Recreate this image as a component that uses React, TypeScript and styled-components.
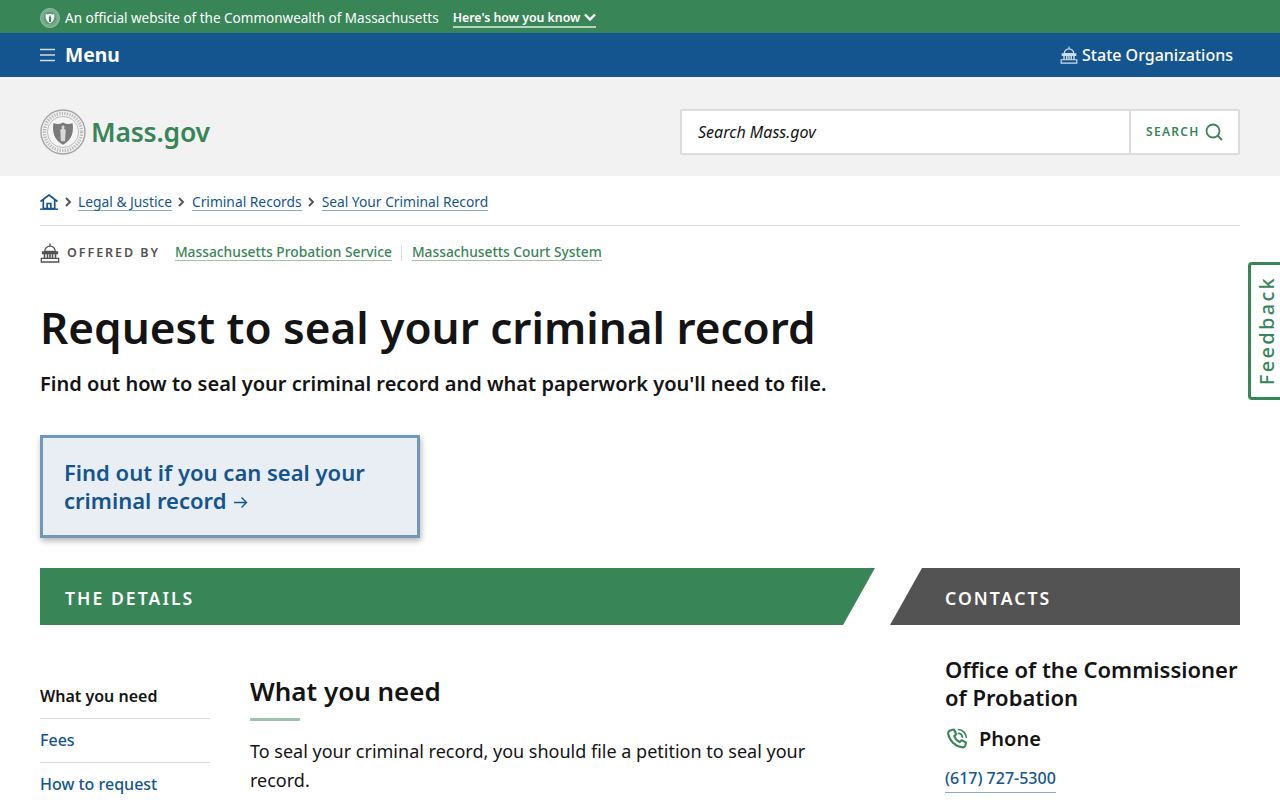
import React from "react";
import styled, { createGlobalStyle } from "styled-components";

const Global = createGlobalStyle`
  html, body { margin: 0; padding: 0; height: 800px; overflow: hidden; background: #fff; }
  body { font-family: "Noto Sans", sans-serif; color: #141414; }
  * { box-sizing: border-box; }
  a { text-decoration: none; }
  h1, h2, h3, p, ul { margin: 0; padding: 0; }
`;

const Page = styled.div`
  position: relative;
  width: 1280px;
  height: 800px;
  overflow: hidden;
`;

const SealBar = styled.div`
  height: 33px;
  background: #388557;
  color: #fff;
  display: flex;
  align-items: center;
  padding: 2px 40px 0;
  font-size: 13.5px;
`;
const SealText = styled.span`
  margin-left: 5px;
`;
const KnowLink = styled.a`
  margin-left: 14px;
  display: flex;
  align-items: center;
  gap: 4px;
  font-size: 12.35px;
  font-weight: 600;
  color: #fff;
  border-bottom: 2px solid #b5d3c1;
  line-height: 17px;
  margin-top: 1px;
`;

const NavBar = styled.nav`
  height: 44px;
  background: #14558f;
  color: #fff;
  display: flex;
  align-items: center;
  justify-content: space-between;
  padding: 0 47px 0 40px;
`;
const MenuButton = styled.div`
  display: flex;
  align-items: center;
  gap: 10px;
  font-size: 19.3px;
  font-weight: 700;
  line-height: 44px;
`;
const OrgLink = styled.a`
  display: flex;
  align-items: center;
  gap: 4px;
  color: #fff;
  font-size: 16px;
  font-weight: 500;
`;

const Header = styled.header`
  height: 99px;
  background: #f2f2f2;
  display: flex;
  align-items: center;
  justify-content: space-between;
  padding: 10px 40px 0;
`;
const Logo = styled.a`
  display: flex;
  align-items: center;
  gap: 5px;
  color: #388557;
  font-size: 26.5px;
  font-weight: 600;
  letter-spacing: -0.2px;
  margin-top: 1px;
`;
const SearchBox = styled.form`
  width: 560px;
  height: 46px;
  margin-top: 1px;
  display: flex;
  background: #fff;
  border: 2px solid #dcdcdc;
`;
const SearchInput = styled.div`
  flex: 1;
  padding-left: 16px;
  font-size: 16px;
  font-style: italic;
  line-height: 42px;
  color: #141414;
`;
const SearchButton = styled.div`
  width: 109px;
  border-left: 2px solid #dcdcdc;
  display: flex;
  align-items: center;
  gap: 5px;
  padding-left: 15px;
  padding-bottom: 1px;
  color: #388557;
  font-size: 12px;
  font-weight: 600;
  letter-spacing: 1.3px;
`;

const Container = styled.div`
  padding: 0 40px;
`;
const Breadcrumbs = styled.div`
  height: 50px;
  display: flex;
  align-items: center;
  border-bottom: 1px solid #dcdcdc;
  padding-top: 3px;
  font-size: 13.8px;
`;
const Crumb = styled.a`
  color: #14558f;
  border-bottom: 1px solid #8aaac7;
  line-height: 17px;
`;
const Sep = styled.span`
  display: inline-flex;
  margin: 0 6.5px;
`;
const HomeIcon = styled.span`
  display: inline-flex;
`;

const OfferedRow = styled.div`
  height: 53px;
  display: flex;
  align-items: center;
`;
const OfferedLabel = styled.span`
  margin: 0 15px 0 7px;
  font-size: 12.5px;
  font-weight: 600;
  letter-spacing: 1.95px;
  color: #535353;
`;
const OrgRef = styled.a`
  color: #388557;
  font-size: 13.8px;
  font-weight: 500;
  line-height: 17px;
  border-bottom: 1px solid #9cc2ab;
  margin-bottom: 2px;
`;
const OrgDivider = styled.span`
  width: 1px;
  height: 16px;
  background: #dcdcdc;
  margin: 0 10px 0 9px;
`;

const Title = styled.h1`
  margin-top: 20px;
  font-size: 44.06px;
  line-height: 56px;
  font-weight: 600;
  color: #141414;
`;
const Lede = styled.p`
  margin-top: 16px;
  font-size: 20.03px;
  line-height: 26px;
  font-weight: 600;
  color: #141414;
`;
const CallOut = styled.a`
  display: block;
  margin-top: 38px;
  width: 380px;
  height: 103px;
  padding: 20px 21px;
  background: #e8eef4;
  border: 3px solid #7397b9;
  box-shadow: 1px 3px 6px rgba(0, 0, 0, 0.3);
  color: #14558f;
  font-size: 22px;
  line-height: 28px;
  font-weight: 600;
`;
const ArrowGlyph = styled.span`
  display: inline-flex;
  margin-left: 6px;
`;

const Bands = styled.div`
  margin-top: 30px;
  display: flex;
  gap: 15px;
`;
const BandTitle = styled.div<{ $tone: string; $clip: string; $pad: number; $width: number }>`
  width: ${(p) => p.$width}px;
  height: 57px;
  padding-left: ${(p) => p.$pad}px;
  background: ${(p) => p.$tone};
  clip-path: ${(p) => p.$clip};
  color: #fff;
  font-size: 17.6px;
  font-weight: 600;
  letter-spacing: 2.05px;
  line-height: 61px;
`;

const Columns = styled.div`
  display: flex;
  align-items: flex-start;
`;
const SideNav = styled.ul`
  width: 170px;
  margin-top: 50px;
  list-style: none;
`;
const SideItem = styled.li<{ $active?: boolean }>`
  height: 44px;
  line-height: 42px;
  font-size: 16px;
  font-weight: ${(p) => (p.$active ? 600 : 500)};
  color: ${(p) => (p.$active ? "#141414" : "#14558f")};
  border-bottom: 1px solid #dcdcdc;
  &:last-child { border-bottom: 0; }
`;
const MainCol = styled.div`
  width: 575px;
  margin: 47px 0 0 40px;
`;
const SectionTitle = styled.h2`
  font-size: 26px;
  line-height: 38px;
  font-weight: 600;
`;
const Rule = styled.div`
  width: 50px;
  height: 3px;
  margin-top: 8px;
  background: #9cc2ab;
  border-radius: 1px;
`;
const Body = styled.p`
  margin-top: 16px;
  font-size: 18px;
  line-height: 29px;
`;
const ContactCol = styled.div`
  margin: 30px 0 0 120px;
  width: 295px;
`;
const ContactName = styled.h3`
  font-size: 22px;
  line-height: 28px;
  font-weight: 600;
  white-space: nowrap;
`;
const ContactHead = styled.div`
  margin-top: 14px;
  display: flex;
  align-items: center;
  gap: 10px;
  font-size: 20px;
  line-height: 28px;
  font-weight: 600;
`;
const PhoneLink = styled.a`
  display: inline-block;
  margin-top: 11px;
  color: #14558f;
  font-size: 16px;
  font-weight: 500;
  line-height: 28px;
  border-bottom: 1px solid #8aaac7;
`;

const Feedback = styled.a`
  position: absolute;
  right: 0;
  top: 262px;
  width: 32px;
  height: 138px;
  padding-left: 3px;
  background: #fff;
  border: 3px solid #388557;
  border-right: 0;
  border-radius: 4px 0 0 4px;
  display: flex;
  align-items: center;
  justify-content: center;
  color: #388557;
  font-size: 20px;
  font-weight: 500;
  letter-spacing: 2.3px;
`;
const FeedbackText = styled.span`
  writing-mode: vertical-rl;
  transform: rotate(180deg);
  line-height: 26px;
`;

const Seal = ({ size, ring, fill, bg, inner }: { size: number; ring: string; fill: string; bg: string; inner: string }) => (
  <svg width={size} height={size} viewBox="0 0 46 46" aria-hidden="true">
    <circle cx="23" cy="23" r="22" fill={bg} stroke={ring} strokeWidth="1.4" />
    <circle cx="23" cy="23" r="18.6" fill="none" stroke={ring} strokeWidth="3.4" strokeDasharray="1.3 1.3" opacity="0.75" />
    <circle cx="23" cy="23" r="15.6" fill="none" stroke={ring} strokeWidth="0.7" />
    <path d="M13.500 14c3 1.400 6.300 1.200 9.500-.6 3.200 1.800 6.500 2 9.500.6 1.500 8.500-.3 16.700-9.500 21.800C13.800 30.700 12 22.500 13.500 14z" fill={fill} />
    <path d="M23 16.500c1 0 1.500.8 1.500 1.700 0 .6-.3 1-.6 1.300l1.800 1.300-.6 11.500h-4.200l-.6-11.500 1.800-1.300c-.3-.3-.6-.7-.6-1.300 0-.9.500-1.700 1.500-1.700z" fill={inner} />
  </svg>
);

const Capitol = ({ size, color }: { size: number; color: string }) => (
  <svg width={size} height={size} viewBox="0 0 20 20" fill="none" stroke={color} strokeWidth="1.300" aria-hidden="true">
    <path d="M10 .5v2.500" />
    <path d="M4.700 8.500c0-3 2.300-5.300 5.300-5.300s5.300 2.300 5.300 5.300z" />
    <path d="M2.500 8.800h15v1.700h-15z" fill={color} />
    <path d="M4.500 10.500v4.700M7.500 10.500v4.700M10 10.500v4.700M12.500 10.500v4.700M15.500 10.500v4.700" strokeWidth="1.600" />
    <path d="M1.300 15.300h17.400v3.700H1.300z" />
  </svg>
);

const Chevron = () => (
  <svg width="7" height="10" viewBox="0 0 7 10" fill="none" stroke="#535353" strokeWidth="1.900" aria-hidden="true">
    <path d="M1 1l4 4-4 4" />
  </svg>
);

export default function App() {
  return (
    <Page>
      <Global />
      <SealBar>
        <Seal size={20} ring="#bcd8c7" fill="#ffffff" bg="#5c9c76" inner="#388557" />
        <SealText>An official website of the Commonwealth of Massachusetts</SealText>
        <KnowLink>
          Here's how you know
          <svg width="12" height="9" viewBox="0 0 12 9" fill="none" stroke="#fff" strokeWidth="2.400" aria-hidden="true">
            <path d="M1 1.500l5 5 5-5" />
          </svg>
        </KnowLink>
      </SealBar>
      <NavBar>
        <MenuButton>
          <svg width="15" height="14" viewBox="0 0 15 14" fill="none" stroke="#cfddea" strokeWidth="1.500" aria-hidden="true">
            <path d="M0 1.500h15M0 7h15M0 12.500h15" />
          </svg>
          Menu
        </MenuButton>
        <OrgLink>
          <Capitol size={18} color="#cfddea" />
          State Organizations
        </OrgLink>
      </NavBar>
      <Header>
        <Logo>
          <Seal size={46} ring="#a5a5a5" fill="#7a7a7a" bg="#f4f4f4" inner="#d9d9d9" />
          Mass.gov
        </Logo>
        <SearchBox>
          <SearchInput>Search Mass.gov</SearchInput>
          <SearchButton>
            SEARCH
            <svg width="18" height="18" viewBox="0 0 18 18" fill="none" stroke="#388557" strokeWidth="1.800" aria-hidden="true">
              <circle cx="8" cy="8" r="6.500" />
              <path d="M12.500 12.500l4.500 4.500" />
            </svg>
          </SearchButton>
        </SearchBox>
      </Header>
      <Container>
        <Breadcrumbs>
          <HomeIcon>
            <svg width="18" height="16" viewBox="0 0 18 16" fill="none" stroke="#14558f" strokeWidth="1.700" aria-hidden="true">
              <path d="M.5 7.500L9 1l8.500 6.500" />
              <path d="M3.300 6v8.500h11.400V6" />
              <path d="M7.200 14.500V9.500h3.600v5" />
              <path d="M0 15.200h18" strokeWidth="1.400" />
            </svg>
          </HomeIcon>
          <Sep><Chevron /></Sep>
          <Crumb>Legal &amp; Justice</Crumb>
          <Sep><Chevron /></Sep>
          <Crumb>Criminal Records</Crumb>
          <Sep><Chevron /></Sep>
          <Crumb>Seal Your Criminal Record</Crumb>
        </Breadcrumbs>
        <OfferedRow>
          <Capitol size={20} color="#535353" />
          <OfferedLabel>OFFERED BY</OfferedLabel>
          <OrgRef>Massachusetts Probation Service</OrgRef>
          <OrgDivider />
          <OrgRef>Massachusetts Court System</OrgRef>
        </OfferedRow>
        <Title>Request to seal your criminal record</Title>
        <Lede>Find out how to seal your criminal record and what paperwork you'll need to file.</Lede>
        <CallOut>
          Find out if you can seal your
          <br />
          criminal record
          <ArrowGlyph>
            <svg width="15" height="13" viewBox="0 0 15 13" fill="none" stroke="#14558f" strokeWidth="1.400" aria-hidden="true">
              <path d="M1 6.500h12.500M8.500 1.500l5 5-5 5" />
            </svg>
          </ArrowGlyph>
        </CallOut>
        <Bands>
          <BandTitle $tone="#388557" $width={835} $pad={25} $clip="polygon(0 0, 100% 0, 803px 100%, 0 100%)">
            THE DETAILS
          </BandTitle>
          <BandTitle $tone="#535353" $width={350} $pad={55} $clip="polygon(32px 0, 100% 0, 100% 100%, 0 100%)">
            CONTACTS
          </BandTitle>
        </Bands>
        <Columns>
          <SideNav>
            <SideItem $active>What you need</SideItem>
            <SideItem>Fees</SideItem>
            <SideItem>How to request</SideItem>
          </SideNav>
          <MainCol>
            <SectionTitle>What you need</SectionTitle>
            <Rule />
            <Body>To seal your criminal record, you should file a petition to seal your record.</Body>
          </MainCol>
          <ContactCol>
            <ContactName>
              Office of the Commissioner
              <br />
              of Probation
            </ContactName>
            <ContactHead>
              <svg width="24" height="24" viewBox="0 0 24 24" fill="none" stroke="#388557" strokeWidth="2.100" strokeLinecap="round" strokeLinejoin="round" aria-hidden="true">
                <path d="M6.500 3l2.500-.5 2.200 4.700-2 1.800c.9 2.700 3 4.900 5.500 6.100l1.900-1.900 4.400 2.400-.6 2.700c-.4 1.400-1.700 2.200-3.100 2C10 19.400 4.300 13.500 3.200 6.900 3 5.200 4.300 3.500 6.500 3z" />
                <path d="M13.500 2.500c4 .2 7.500 3.500 7.800 7.800M13.500 6.400c2 .2 3.700 1.800 3.900 3.900" strokeWidth="1.600" />
              </svg>
              Phone
            </ContactHead>
            <PhoneLink>(617) 727-5300</PhoneLink>
          </ContactCol>
        </Columns>
      </Container>
      <Feedback>
        <FeedbackText>Feedback</FeedbackText>
      </Feedback>
    </Page>
  );
}
